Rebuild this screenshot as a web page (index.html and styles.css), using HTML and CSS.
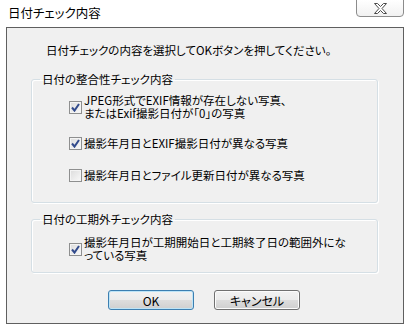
FILE: index.html
```html
<!DOCTYPE html>
<html lang="ja">
<head>
  <meta charset="UTF-8">
  <title>日付チェック内容</title>
  <link rel="stylesheet" href="styles.css">
</head>
<body>

  <div class="window">
    <!-- タイトルバー -->
    <div class="titlebar">
      <span class="title">日付チェック内容</span>
      <button class="close" aria-label="閉じる">
        <svg width="13" height="11" viewBox="0 0 13 11">
          <path d="M0.5,0.5 H3.5 L6.5,3.5 L9.5,0.5 H12.5 L8,5.5 L12.5,10.5 H9.5 L6.5,7.5 L3.5,10.5 H0.5 L5,5.5 Z" fill="#fff" stroke="#4a4a4a" stroke-width="1"/>
        </svg>
      </button>
    </div>

    <div class="client">
      <p class="intro">日付チェックの内容を選択してOKボタンを押してください。</p>

      <fieldset class="group group-main">
        <legend>日付の整合性チェック内容</legend>
        <label class="check row-1">
          <span class="box on"></span>
          <span class="text">JPEG形式でEXIF情報が存在しない写真、<br>またはExif撮影日付が「0」の写真</span>
        </label>
        <label class="check row-2">
          <span class="box on"></span>
          <span class="text">撮影年月日とEXIF撮影日付が異なる写真</span>
        </label>
        <label class="check row-3">
          <span class="box"></span>
          <span class="text">撮影年月日とファイル更新日付が異なる写真</span>
        </label>
      </fieldset>

      <fieldset class="group group-period">
        <legend>日付の工期外チェック内容</legend>
        <label class="check row-4">
          <span class="box on"></span>
          <span class="text">撮影年月日が工期開始日と工期終了日の範囲外にな<br>っている写真</span>
        </label>
      </fieldset>

      <div class="buttons">
        <button class="btn default">OK</button>
        <button class="btn">キャンセル</button>
      </div>
    </div>
  </div>

</body>
</html>
```

FILE: styles.css
```css
body {
  margin: 0;
  background-color: #fff;
  font-family: "Noto Sans CJK JP", "Noto Sans", sans-serif;
  font-feature-settings: "palt";
  font-size: 11.5px;
  color: #000;
}

.window {
  width: 411px;
  height: 330px;
  overflow: hidden;
}

/* タイトルバー */
.titlebar {
  height: 27px;
  display: flex;
  justify-content: space-between;
  align-items: flex-start;
}

.title {
  margin: 6px 0 0 8px;
  font-size: 12.5px;
  line-height: 14px;
}

.close {
  width: 48px;
  height: 18px;
  margin: -1px 7px 0 0;
  padding: 0;
  border: 1px solid #8c8c8c;
  border-radius: 0 0 4px 4px;
  background: linear-gradient(#ffffff, #f1f1f1);
  display: flex;
  align-items: center;
  justify-content: center;
}

/* クライアント領域 */
.client {
  margin-left: 6px;
  width: 396px;
  height: 295px;
  border: 1px solid #5f5f5f;
  background-color: #f0f0f0;
  display: flex;
  flex-direction: column;
}

.intro {
  margin: 15px 0 0 39px;
  line-height: 14px;
}

.group {
  margin: 0 25px 0 24px;
  padding: 0 0 0 37px;
  border: 1px solid #d5dfe5;
  border-radius: 3px;
  box-shadow: inset 1px 1px 0 #fff, 1px 1px 0 #fff;
  min-width: 0;
}

.group legend {
  margin-left: -29px;
  padding: 0 2px;
  line-height: 14px;
}

.group-main {
  margin-top: 15px;
  height: 131px;
  box-sizing: border-box;
}

.group-period {
  margin-top: 9px;
  height: 61px;
  box-sizing: border-box;
}

.check {
  display: flex;
  align-items: center;
  gap: 2px;
  line-height: 13px;
}

.row-1 { margin-top: 8px; }
.row-2 { margin-top: 17px; }
.row-3 { margin-top: 19px; }
.row-4 { margin-top: 10px; }

.box {
  flex: none;
  width: 11px;
  height: 11px;
  border: 1px solid #8e8f8f;
  background: linear-gradient(135deg, #dcdcdc, #f9f9f9);
  box-shadow: inset 0 0 0 1px #f4f4f4;
}

.box.on {
  background-image:
    url("data:image/svg+xml,%3Csvg xmlns='http://www.w3.org/2000/svg' width='11' height='11'%3E%3Cpath d='M2 5.5 L4.5 8.5 L9 2' fill='none' stroke='%23324b8c' stroke-width='2'/%3E%3C/svg%3E"),
    linear-gradient(135deg, #dcdcdc, #f9f9f9);
}

/* ボタン */
.buttons {
  margin-top: 17px;
  display: flex;
  gap: 20px;
  padding-left: 101px;
}

.btn {
  width: 86px;
  height: 20px;
  padding: 0;
  font: inherit;
  font-size: 12px;
  color: #000;
  border: 1px solid #707070;
  border-radius: 3px;
  background: linear-gradient(#f2f2f2 0%, #ebebeb 50%, #dddddd 51%, #cfcfcf 100%);
  box-shadow: inset 0 0 0 1px #fcfcfc;
}

.btn.default {
  border-color: #3c7fb1;
  box-shadow: inset 0 0 0 1px #bde4f7;
}
```
